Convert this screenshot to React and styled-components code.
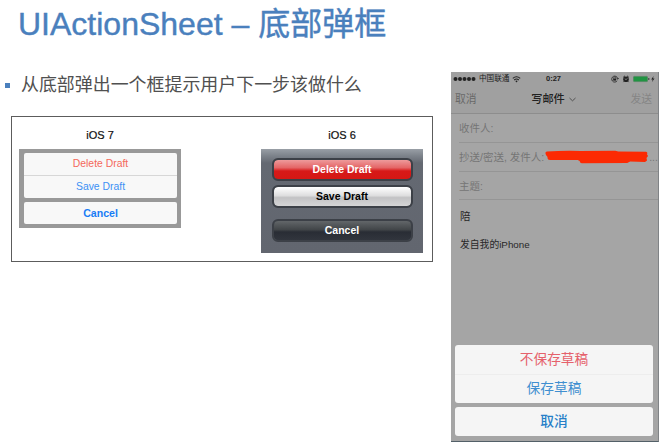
import React from "react";
import styled, { createGlobalStyle, css } from "styled-components";

const GlobalStyle = createGlobalStyle`
  * { box-sizing: border-box; }
  body { margin: 0; background: #fff; overflow: hidden; }
  h1, h2, p { margin: 0; font-weight: 400; }
  button { margin: 0; padding: 0; border: 0; font-family: inherit; }
`;

const Slide = styled.main`
  width: 659px;
  height: 442px;
  overflow: hidden;
  background: #fff;
  font-family: "Liberation Sans", "Noto Sans CJK SC", sans-serif;
`;

const Title = styled.h1`
  height: 72px;
  padding: 3px 0 0 18px;
  color: #4a80bd;
  font-size: 32px;
  line-height: 43px;
  white-space: nowrap;
  -webkit-text-stroke: 0.4px #4a80bd;
`;

const Columns = styled.div`
  display: flex;
  height: 370px;
`;

const Notes = styled.section`
  width: 451px;
  padding-left: 5px;
`;

const Bullet = styled.p`
  display: flex;
  align-items: center;
  height: 26px;
  color: #505050;
  font-size: 17.95px;
  line-height: 26px;
  white-space: nowrap;

  &::before {
    content: "";
    width: 5px;
    height: 5px;
    margin-right: 11px;
    margin-top: 1px;
    background: #4a80bd;
  }
`;

const Comparison = styled.div`
  display: flex;
  justify-content: space-between;
  width: 422px;
  height: 146px;
  margin: 18px 0 0 6px;
  padding: 12px 9px 0 7px;
  border: 1px solid #5c5c5c;
`;

const Version = styled.div`
  width: 162px;
`;

const VersionName = styled.h2`
  height: 20px;
  color: #111;
  font-size: 11px;
  line-height: 13px;
  text-align: center;
  -webkit-text-stroke: 0.2px #111;
`;

const FlatSheet = styled.div`
  display: flex;
  flex-direction: column;
  gap: 4px;
  height: 79px;
  padding: 4px 4px 4px 5px;
  background: #999;
`;

const FlatGroup = styled.div`
  border-radius: 2px;
  background: #f8f8f8;
  overflow: hidden;
`;

const FlatButton = styled.button`
  display: block;
  width: 100%;
  height: ${(p) => p.$height}px;
  background: transparent;
  color: ${(p) => p.$color};
  font-size: ${(p) => (p.$bold ? 10.6 : 10.4)}px;
  font-weight: ${(p) => (p.$bold ? 700 : 400)};
  line-height: 22px;

  & + & { border-top: 1px solid #d7d7d7; }
`;

const GlossySheet = styled.div`
  display: flex;
  flex-direction: column;
  align-items: center;
  height: 104px;
  padding-top: 9px;
  background: linear-gradient(#999fa6 0, #7c828a 7px, #646972 14px, #62666f 100%);
`;

const glossTones = {
  red: css`
    color: #fff;
    background: linear-gradient(#ee9a9b 0, #e46667 40%, #d71918 58%, #d51814 100%);
  `,
  silver: css`
    color: #000;
    background: linear-gradient(#fff 0, #dededf 45%, #c2c2c4 56%, #d5d5d6 100%);
  `,
  dark: css`
    color: #fff;
    background: linear-gradient(#626669 0, #424649 45%, #292d35 58%, #31353d 100%);
  `,
};

const GlossyButton = styled.button`
  width: 141px;
  height: 23px;
  margin-top: ${(p) => p.$gap || 0}px;
  border: 2px solid #3c4047;
  border-radius: 6px;
  font-size: 10.5px;
  font-weight: 700;
  line-height: 19px;
  ${(p) => glossTones[p.$tone]}
  background-clip: padding-box;
  background-color: #3c4047;
`;

const Phone = styled.section`
  display: flex;
  flex-direction: column;
  width: 208px;
  height: 370px;
  border-right: 1px solid #808386;
  border-bottom: 1px solid #536068;
  background: #a5a5a5;
`;

const StatusBar = styled.div`
  display: grid;
  grid-template-columns: 88px 1fr 47px;
  align-items: center;
  height: 14px;
  background: #a0a0a0;
  color: #222;
  font-size: 7.6px;
  line-height: 14px;
`;

const Carrier = styled.div`
  display: flex;
  align-items: center;
  gap: 3px;
  padding-left: 2px;
  white-space: nowrap;
`;

const Clock = styled.div`
  padding-left: 7px;
  font-size: 7.5px;
  font-weight: 700;
`;

const NavBar = styled.div`
  display: flex;
  align-items: center;
  justify-content: space-between;
  height: 28px;
  padding: 0 6px 1px 4px;
  border-bottom: 1px solid #8d8d8d;
  background: #a0a0a0;
  line-height: 20px;
`;

const NavAction = styled.span`
  color: ${(p) => (p.$disabled ? "#858585" : "#686868")};
  font-size: 10.8px;
`;

const NavTitle = styled.span`
  display: flex;
  align-items: center;
  gap: 4px;
  color: #222;
  font-size: 11.2px;
  font-weight: 500;
`;

const Field = styled.div`
  display: flex;
  align-items: center;
  height: ${(p) => p.$height || 29}px;
  margin-left: 8px;
  border-bottom: 1px solid #959595;
  color: #757575;
  font-size: 10.5px;
  line-height: 20px;
  white-space: nowrap;
`;

const Redaction = styled.svg`
  flex: none;
  width: 103px;
  height: 14px;
  margin: 0 1px;
`;

const Message = styled.p`
  padding: ${(p) => p.$top}px 0 0 9px;
  color: #282828;
  font-size: ${(p) => p.$size}px;
  line-height: 16px;
`;

const ActionSheet = styled.div`
  display: flex;
  flex-direction: column;
  gap: 4px;
  margin: auto 5px 5px 4px;
`;

const SheetGroup = styled.div`
  border-radius: 3px;
  background: #f5f5f5;
`;

const SheetButton = styled.button`
  display: block;
  width: 100%;
  height: 29px;
  background: transparent;
  color: ${(p) => p.$color};
  font-size: 13.7px;
  font-weight: ${(p) => (p.$strong ? 500 : 400)};
  line-height: 28px;

  & + & { border-top: 1px solid #ededed; }
`;

function SignalDots() {
  return (
    <svg width="23" height="6" viewBox="0 0 23 6" fill="#222">
      {[2.5, 7, 11.5, 16, 20.5].map((x) => (
        <circle key={x} cx={x} cy="3" r="2" />
      ))}
    </svg>
  );
}

function Wifi() {
  return (
    <svg width="9" height="7" viewBox="0 0 9 7" fill="none" stroke="#222">
      <path d="M.8 2.3Q4.5-.8 8.2 2.3M2.2 4Q4.5 2.1 6.8 4" strokeWidth="1.1" />
      <path d="M3.3 5 4.5 6.4 5.7 5Q4.5 4 3.3 5Z" fill="#222" stroke="none" />
    </svg>
  );
}

function StatusIcons() {
  return (
    <svg width="47" height="10" viewBox="0 0 47 10" fill="none" stroke="#222">
      <path d="M6.2 6.8A3 3 0 1 1 6.7 4.7M5.7 4.2l1.1 1 .8-1.2" strokeWidth=".8" />
      <path d="M2.6 4.6V4a1.1 1.1 0 0 1 2.2 0v.6" strokeWidth=".6" />
      <rect x="2.2" y="4.5" width="3" height="2.1" fill="#222" stroke="none" />
      <circle cx="15" cy="5.2" r="2.8" fill="#222" stroke="none" />
      <path d="M12.3 3.2 13.9 1.9M17.7 3.2 16.1 1.9M13 7.3l-.6.8M17 7.3l.6.8" strokeWidth="1" />
      <path d="m13.8 4.8 1.2.8 1.5-1.2" stroke="#a0a0a0" strokeWidth=".7" />
      <rect x="22.5" y="2.4" width="14" height="5.2" rx=".7" fill="#219443" stroke="#4a8559" strokeWidth=".6" />
      <path d="M37.8 4v2" strokeWidth=".8" />
      <path d="m42.6 2-2.4 3.4h1.5L41 8l2.5-3.6H42Z" fill="#222" stroke="none" />
    </svg>
  );
}

function Chevron() {
  return (
    <svg width="7" height="5" viewBox="0 0 7 5" fill="none" stroke="#484848" strokeWidth=".9">
      <path d="m.5 1 3 2.8L6.5 1" />
    </svg>
  );
}

export default function App() {
  return (
    <>
      <GlobalStyle />
      <Slide>
        <Title>UIActionSheet – 底部弹框</Title>
        <Columns>
          <Notes>
            <Bullet>从底部弹出一个框提示用户下一步该做什么</Bullet>
            <Comparison>
              <Version>
                <VersionName>iOS 7</VersionName>
                <FlatSheet>
                  <FlatGroup>
                    <FlatButton $height={22} $color="#f4685b">Delete Draft</FlatButton>
                    <FlatButton $height={23} $color="#3d91f5">Save Draft</FlatButton>
                  </FlatGroup>
                  <FlatGroup>
                    <FlatButton $height={22} $color="#187df5" $bold>Cancel</FlatButton>
                  </FlatGroup>
                </FlatSheet>
              </Version>
              <Version>
                <VersionName>iOS 6</VersionName>
                <GlossySheet>
                  <GlossyButton $tone="red">Delete Draft</GlossyButton>
                  <GlossyButton $tone="silver" $gap={4}>Save Draft</GlossyButton>
                  <GlossyButton $tone="dark" $gap={11}>Cancel</GlossyButton>
                </GlossySheet>
              </Version>
            </Comparison>
          </Notes>
          <Phone>
            <StatusBar>
              <Carrier><SignalDots />中国联通<Wifi /></Carrier>
              <Clock>0:27</Clock>
              <StatusIcons />
            </StatusBar>
            <NavBar>
              <NavAction>取消</NavAction>
              <NavTitle>写邮件<Chevron /></NavTitle>
              <NavAction $disabled>发送</NavAction>
            </NavBar>
            <Field>收件人:</Field>
            <Field>
              抄送/密送, 发件人:
              <Redaction viewBox="0 0 104 14" preserveAspectRatio="none" fill="#fc2a03">
                <path d="M2 1.5Q20 .4 36 1L71 .8 74 1.5 102 1.7Q104 2 103 4.2L104 6 102.5 8 103 10.5 101 12 86 11.5 83 13 37 13.3Q35 13 35 11L33 10H5Q2 10 2.6 7L1 5Q-.5 2 2 1.5Z" />
              </Redaction>
              ...
            </Field>
            <Field $height={28}>主题:</Field>
            <Message $top={8} $size={10.5}>陪</Message>
            <Message $top={13} $size={9.8}>发自我的iPhone</Message>
            <ActionSheet>
              <SheetGroup>
                <SheetButton $color="#e5616b">不保存草稿</SheetButton>
                <SheetButton $color="#408fd0">保存草稿</SheetButton>
              </SheetGroup>
              <SheetGroup>
                <SheetButton $color="#267fc8" $strong>取消</SheetButton>
              </SheetGroup>
            </ActionSheet>
          </Phone>
        </Columns>
      </Slide>
    </>
  );
}
